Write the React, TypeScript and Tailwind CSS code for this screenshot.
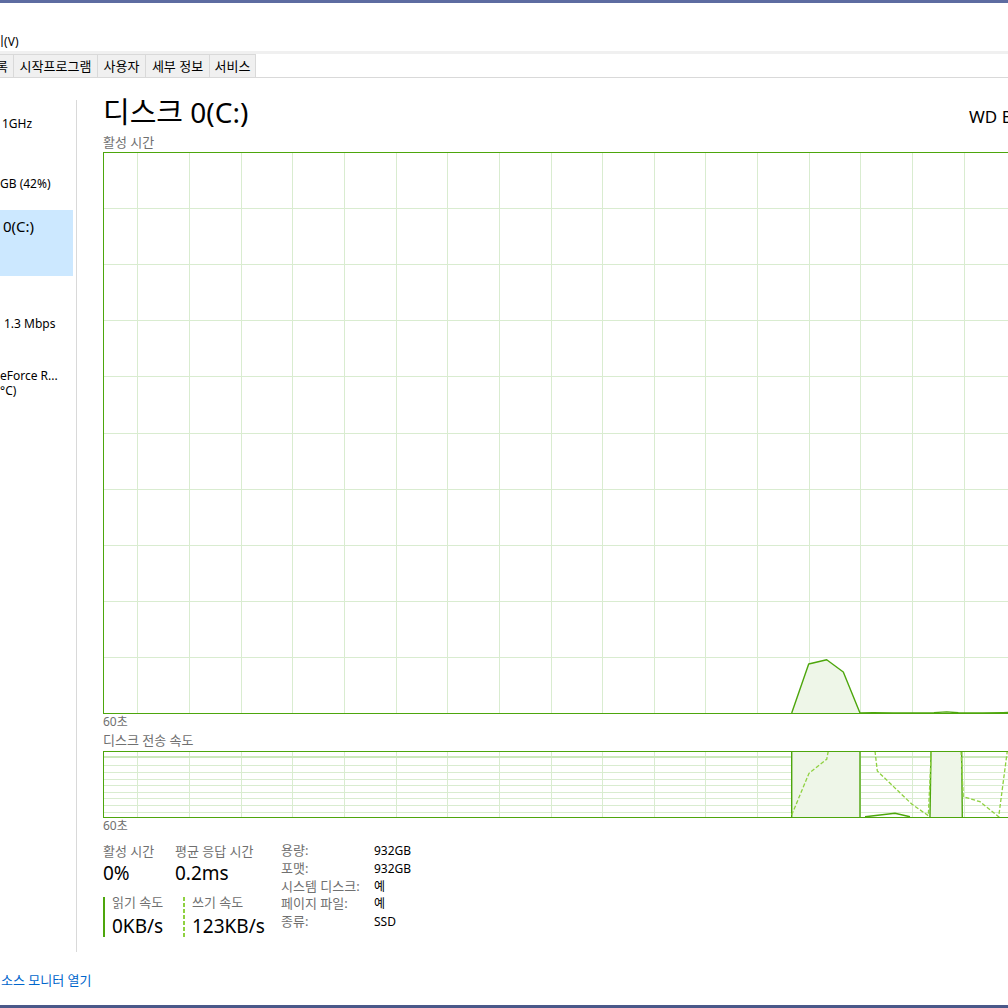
const GREEN = "#4da60c";
const GRID = "#d9ecd0";
const WRITE = "#8fd140";
const VX = Array.from({ length: 20 }, (_, k) => Math.round(34.3 + 51.65 * k) + 0.5);

function ActivityChart() {
  const W = 1040;
  const H = 562;
  const HY = Array.from({ length: 9 }, (_, k) => Math.round(56.1 * (k + 1)) + 0.5);
  return (
    <svg width={W} height={H} className="block">
      {VX.map((x) => (
        <line key={x} x1={x} y1={0} x2={x} y2={H} stroke={GRID} />
      ))}
      {HY.map((y) => (
        <line key={y} x1={0} y1={y} x2={W} y2={y} stroke={GRID} />
      ))}
      <path d="M688.7 561 L705.7 512 L723.7 507.7 L740.3 520 L757 561 Z" fill="#eef6e8" />
      <polyline
        points="688.7,561 705.7,512 723.7,507.7 740.3,520 757,561 770,560.6 790,561 831,560.6 843.7,559.9 855.3,560.8 880,561 900,560.6 910,560.4"
        fill="none"
        stroke={GREEN}
        strokeWidth={1.4}
        strokeLinejoin="round"
      />
      <rect x={0.5} y={0.5} width={W - 1} height={H - 1} fill="none" stroke={GREEN} />
    </svg>
  );
}

function TransferChart() {
  const W = 1040;
  const H = 67;
  const HY = Array.from({ length: 8 }, (_, k) => Math.round(14.3 + 6.6 * k) + 0.5);
  return (
    <svg width={W} height={H} className="block">
      {VX.map((x) => (
        <line key={x} x1={x} y1={0} x2={x} y2={H} stroke={GRID} />
      ))}
      <line x1={0} y1={6} x2={W} y2={6} stroke="#cde8bd" strokeWidth={2} />
      {HY.map((y) => (
        <line key={y} x1={0} y1={y} x2={W} y2={y} stroke={GRID} />
      ))}
      {/* read */}
      <path d="M688.7 66 L688.7 0 L757 0 L757 66 Z" fill="#eef6e8" />
      <path d="M827 66 L828 0 L858.7 0 L859.3 66 Z" fill="#eef6e8" />
      <polyline points="688.7,66 688.7,0" fill="none" stroke={GREEN} strokeWidth={1.4} />
      <polyline points="757,0 757,66" fill="none" stroke={GREEN} strokeWidth={1.4} />
      <polyline points="827,66 828,0" fill="none" stroke={GREEN} strokeWidth={1.4} />
      <polyline points="858.7,0 859.3,66" fill="none" stroke={GREEN} strokeWidth={1.4} />
      <polyline points="762,65.7 792,62.3 807,65.7" fill="none" stroke={GREEN} strokeWidth={1.4} />
      {/* write */}
      <g fill="none" stroke={WRITE} strokeWidth={1.3} strokeDasharray="4 2">
        <polyline points="688.7,64 706,22.3 723.7,8.3 725.3,0" />
        <polyline points="772,0 774.3,20 808.7,53 825.3,64.7 828.3,0" />
        <polyline points="858,0 860.3,45.7 877,50.7 895.7,65.7 904.3,0" />
      </g>
      <rect x={0.5} y={0.5} width={W - 1} height={H - 1} fill="none" stroke={GREEN} />
    </svg>
  );
}

function VDash() {
  return (
    <svg width={2} height={40} className="block shrink-0">
      <line x1={1} y1={0} x2={1} y2={40} stroke={WRITE} strokeWidth={2} strokeDasharray="4 2" />
    </svg>
  );
}

const props = [
  ["용량:", "932GB"],
  ["포맷:", "932GB"],
  ["시스템 디스크:", "예"],
  ["페이지 파일:", "예"],
  ["종류:", "SSD"],
];

function Sidebar() {
  return (
    <div className="w-[76px] shrink-0 flex flex-col text-[12px] text-black whitespace-nowrap overflow-hidden">
      <div className="h-[66px]">
        <div className="mt-[38px] pl-[2px] leading-[16px]">1GHz</div>
      </div>
      <div className="h-[66px]">
        <div className="mt-[32px] leading-[16px]">GB (42%)</div>
      </div>
      <div className="h-[66px] w-[73px] bg-[#cce8ff]">
        <div className="pt-[6px] pl-[3px] text-[15px] leading-[20px]">0(C:)</div>
      </div>
      <div className="h-[66px]">
        <div className="mt-[40px] pl-[4px] leading-[16px]">1.3 Mbps</div>
      </div>
      <div className="h-[66px]">
        <div className="mt-[27px] leading-[14px]">eForce R...</div>
        <div className="leading-[15px]">°C)</div>
      </div>
    </div>
  );
}

export default function App() {
  return (
    <div className="w-[1008px] h-[1008px] overflow-hidden bg-white flex flex-col font-['Noto_Sans','Noto_Sans_CJK_KR',sans-serif] text-black">
      <div className="h-[3px] shrink-0 bg-[#5d6ca1]" />

      {/* menu */}
      <div className="h-[48px] shrink-0 flex items-end pb-[1px] overflow-hidden">
        <div className="-ml-[18px] text-[12px] leading-[16px] whitespace-nowrap">보기(V)</div>
      </div>
      <div className="h-[3px] shrink-0 bg-[#f0f0f0]" />

      {/* tabs */}
      <div className="h-[24px] shrink-0 flex border-b border-[#d9d9d9] text-[13px] leading-[22px] whitespace-nowrap">
        <div className="w-[14px] overflow-hidden flex justify-end pr-[5px] bg-[#f0f0f0] border-r border-t border-[#d9d9d9]">
          <span className="shrink-0">기록</span>
        </div>
        <div className="w-[84px] text-center bg-[#f0f0f0] border-r border-t border-[#d9d9d9]">시작프로그램</div>
        <div className="w-[48px] text-center bg-[#f0f0f0] border-r border-t border-[#d9d9d9]">사용자</div>
        <div className="w-[64px] text-center bg-[#f0f0f0] border-r border-t border-[#d9d9d9]">세부 정보</div>
        <div className="w-[46px] text-center bg-[#f0f0f0] border-r border-t border-[#d9d9d9]">서비스</div>
      </div>

      {/* main */}
      <div className="h-[874px] shrink-0 flex">
        <Sidebar />
        <div className="w-px shrink-0 mt-[22px] h-[852px] bg-[#d9d9d9]" />
        <div className="ml-[26px] w-[1040px] shrink-0 pt-[16px] flex flex-col">
          <div className="h-[36px] flex items-baseline whitespace-nowrap">
            <div className="w-[866px] shrink-0 text-[28px] leading-[36px]">
              <span className="text-[29px]">디스크</span> 0(C:)
            </div>
            <div className="text-[17px] leading-[24px]">WD Blue SN550 1TB</div>
          </div>
          <div className="mt-[3px] h-[18px] text-[13px] leading-[18px] text-[#707070]">활성 시간</div>
          <div className="mt-[1px]">
            <ActivityChart />
          </div>
          <div className="h-[16px] text-[12px] leading-[16px] text-[#707070]">60초</div>
          <div className="mt-[2px] h-[16px] text-[13px] leading-[16px] text-[#707070]">디스크 전송 속도</div>
          <div className="mt-[3px]">
            <TransferChart />
          </div>
          <div className="h-[16px] text-[12px] leading-[16px] text-[#707070]">60초</div>

          {/* stats */}
          <div className="mt-[8px] flex whitespace-nowrap">
            <div className="w-[178px] shrink-0 flex flex-col">
              <div className="flex">
                <div className="w-[72px]">
                  <div className="h-[18px] text-[13px] leading-[18px] text-[#707070]">활성 시간</div>
                  <div className="h-[26px] text-[19px] leading-[26px]">0%</div>
                </div>
                <div>
                  <div className="h-[18px] text-[13px] leading-[18px] text-[#707070]">평균 응답 시간</div>
                  <div className="h-[26px] text-[19px] leading-[26px]">0.2ms</div>
                </div>
              </div>
              <div className="mt-[11px] flex">
                <div className="w-[80px] h-[40px] flex">
                  <div className="w-[2px] h-[40px] bg-[#4da60c]" />
                  <div className="pl-[7px]">
                    <div className="h-[10px] text-[13px] leading-[10px] text-[#707070]">읽기 속도</div>
                    <div className="mt-[7px] h-[24px] text-[19px] leading-[24px]">0KB/s</div>
                  </div>
                </div>
                <div className="h-[40px] flex">
                  <VDash />
                  <div className="pl-[7px]">
                    <div className="h-[10px] text-[13px] leading-[10px] text-[#707070]">쓰기 속도</div>
                    <div className="mt-[7px] h-[24px] text-[19px] leading-[24px]">123KB/s</div>
                  </div>
                </div>
              </div>
            </div>
            <div className="flex flex-col text-[12px] leading-[17.75px]">
              {props.map(([k, v]) => (
                <div key={k} className="flex h-[17.75px]">
                  <div className="w-[93px] text-[13px] text-[#707070]">{k}</div>
                  <div>{v}</div>
                </div>
              ))}
            </div>
          </div>
        </div>
      </div>

      {/* footer */}
      <div className="h-[53px] shrink-0 pt-[20px] pl-[1px]">
        <div className="text-[13px] leading-[16px] text-[#0066cc]">소스 모니터 열기</div>
      </div>
      <div className="h-[3px] shrink-0 bg-[#4a5889]" />
    </div>
  );
}
